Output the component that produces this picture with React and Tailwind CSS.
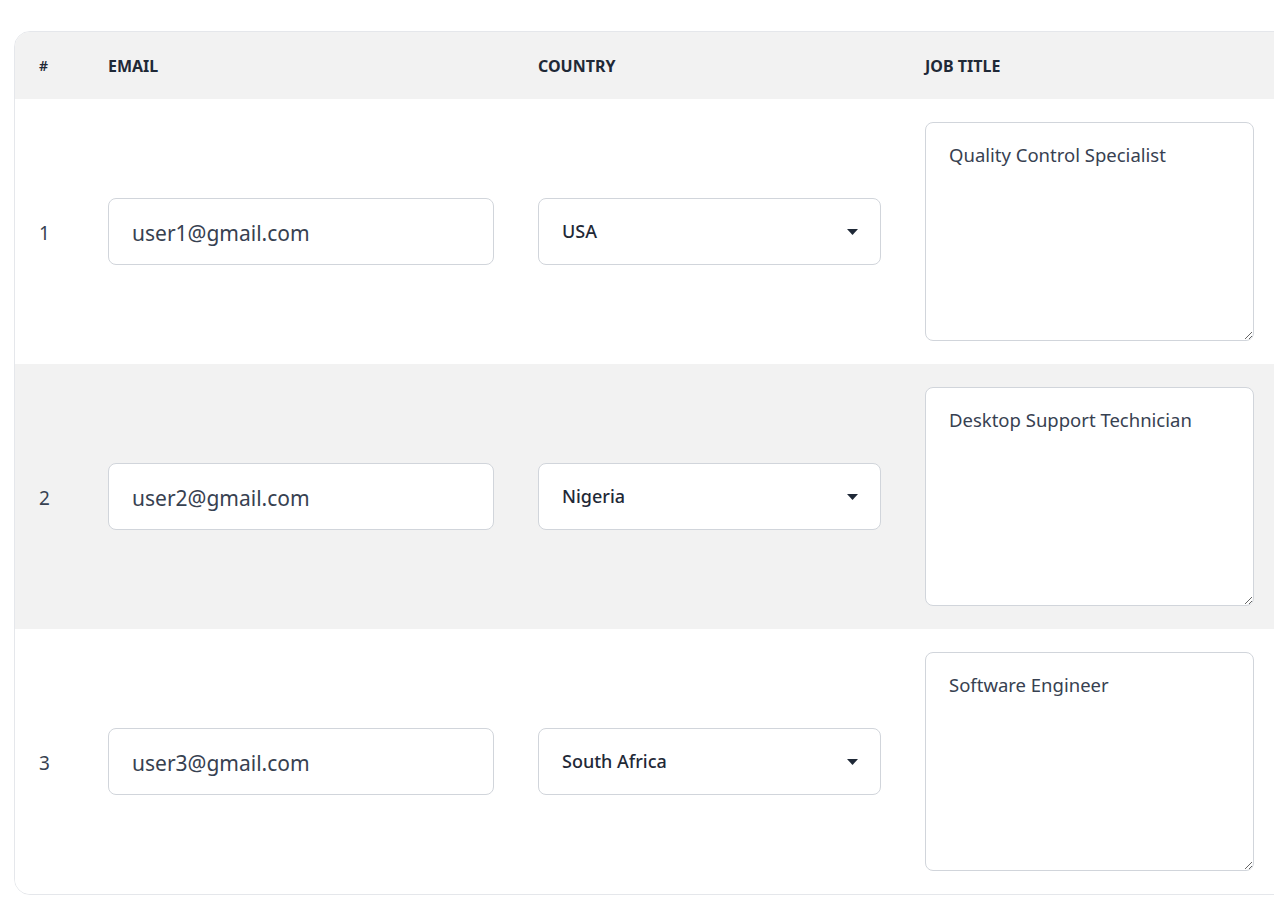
import { useState } from "react";

const initialRows = [
  { id: 1, email: "user1@gmail.com", country: "USA", job: "Quality Control Specialist" },
  { id: 2, email: "user2@gmail.com", country: "Nigeria", job: "Desktop Support Technician" },
  { id: 3, email: "user3@gmail.com", country: "South Africa", job: "Software Engineer" },
];

const countries = ["USA", "Nigeria", "South Africa", "Ghana", "Kenya"];

function CountrySelect({ value, onChange }) {
  return (
    <div className="relative w-[343px]">
      <select
        value={value}
        onChange={(e) => onChange(e.target.value)}
        className="w-full h-[67px] appearance-none rounded-lg border border-[#d1d5db] bg-white pl-[23px] pr-10 text-[18px] font-medium text-[#1f2937] outline-none"
      >
        {countries.map((c) => (
          <option key={c} value={c}>
            {c}
          </option>
        ))}
      </select>
      <svg
        className="pointer-events-none absolute right-[23px] top-1/2 -translate-y-1/2"
        width="11"
        height="6"
        viewBox="0 0 11 6"
      >
        <path d="M0 0 L11 0 L5.5 6 Z" fill="#1f2937" />
      </svg>
    </div>
  );
}

export default function App() {
  const [rows, setRows] = useState(initialRows);

  const update = (id, key, val) => {
    setRows(rows.map((r) => (r.id === id ? { ...r, [key]: val } : r)));
  };

  return (
    <div
      className="w-full h-[906px] overflow-hidden bg-white pl-[14px] pt-[31px]"
      style={{ fontFamily: '"Noto Sans", "Open Sans", sans-serif' }}
    >
      <div className="w-[1300px] overflow-hidden rounded-2xl border border-[#e5e7eb]">
        <table className="w-full border-collapse text-left">
          <thead className="bg-[#f2f2f2]">
            <tr className="h-[67px]">
              <th className="w-[69px] pl-6 text-[14px] font-semibold text-[#1f2937]">#</th>
              <th className="w-[430px] pl-6 text-[16px] font-bold text-[#1f2937]">EMAIL</th>
              <th className="w-[387px] pl-6 text-[16px] font-bold text-[#1f2937]">COUNTRY</th>
              <th className="pl-6 text-[16px] font-bold text-[#1f2937]">JOB TITLE</th>
            </tr>
          </thead>
          <tbody>
            {rows.map((row, i) => (
              <tr key={row.id} className={i % 2 === 1 ? "bg-[#f2f2f2]" : "bg-white"}>
                <td className="pl-6 pt-[3px] text-[19px] text-[#374151]">{row.id}</td>
                <td className="pl-6">
                  <input
                    type="email"
                    value={row.email}
                    onChange={(e) => update(row.id, "email", e.target.value)}
                    className="w-[386px] h-[67px] rounded-lg border border-[#d1d5db] bg-white px-[23px] pt-[3px] text-[21px] text-[#374151] outline-none"
                  />
                </td>
                <td className="pl-6">
                  <CountrySelect value={row.country} onChange={(v) => update(row.id, "country", v)} />
                </td>
                <td className="pl-6 py-[23px]">
                  <textarea
                    value={row.job}
                    onChange={(e) => update(row.id, "job", e.target.value)}
                    className="block w-[329px] h-[219px] rounded-lg border border-[#d1d5db] bg-white px-[23px] py-[18px] text-[18.5px] text-[#374151] outline-none"
                  />
                </td>
              </tr>
            ))}
          </tbody>
        </table>
      </div>
    </div>
  );
}
